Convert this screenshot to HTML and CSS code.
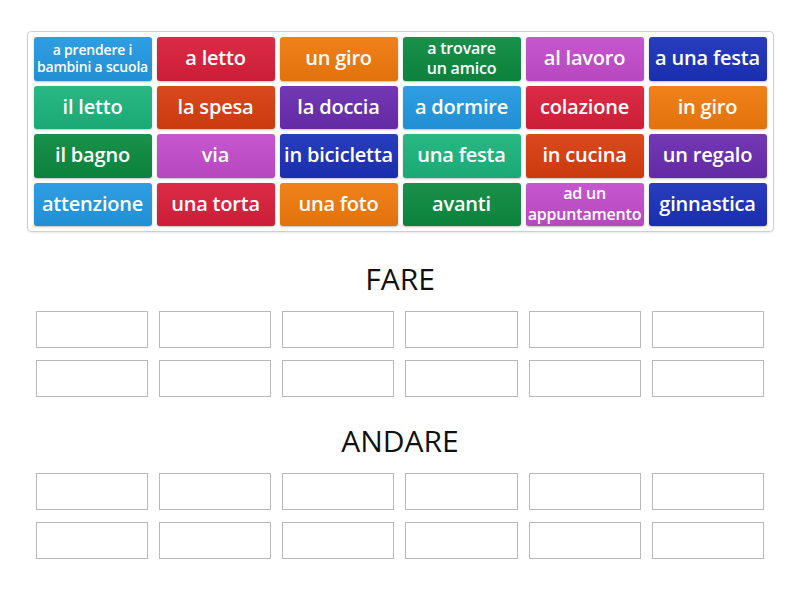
FILE: index.html
```html
<!DOCTYPE html>
<html lang="it">
<head>
  <meta charset="UTF-8" />
  <title>Fare o andare</title>
  <link rel="stylesheet" href="styles.css">
</head>
<body>

  <div class="page">
    <div class="bank">
      <div class="tile blue two small">a prendere i<br>bambini a scuola</div>
      <div class="tile red">a letto</div>
      <div class="tile orange">un giro</div>
      <div class="tile green two">a trovare<br>un amico</div>
      <div class="tile pink">al lavoro</div>
      <div class="tile navy">a una festa</div>

      <div class="tile teal">il letto</div>
      <div class="tile rust">la spesa</div>
      <div class="tile purple">la doccia</div>
      <div class="tile blue">a dormire</div>
      <div class="tile red">colazione</div>
      <div class="tile orange">in giro</div>

      <div class="tile green">il bagno</div>
      <div class="tile pink">via</div>
      <div class="tile navy">in bicicletta</div>
      <div class="tile teal">una festa</div>
      <div class="tile rust">in cucina</div>
      <div class="tile purple">un regalo</div>

      <div class="tile blue">attenzione</div>
      <div class="tile red">una torta</div>
      <div class="tile orange">una foto</div>
      <div class="tile green">avanti</div>
      <div class="tile pink two">ad un<br>appuntamento</div>
      <div class="tile navy">ginnastica</div>
    </div>

    <div class="group">
      <h2>FARE</h2>
      <div class="slots">
        <div class="slot"></div><div class="slot"></div><div class="slot"></div>
        <div class="slot"></div><div class="slot"></div><div class="slot"></div>
        <div class="slot"></div><div class="slot"></div><div class="slot"></div>
        <div class="slot"></div><div class="slot"></div><div class="slot"></div>
      </div>
    </div>

    <div class="group">
      <h2>ANDARE</h2>
      <div class="slots">
        <div class="slot"></div><div class="slot"></div><div class="slot"></div>
        <div class="slot"></div><div class="slot"></div><div class="slot"></div>
        <div class="slot"></div><div class="slot"></div><div class="slot"></div>
        <div class="slot"></div><div class="slot"></div><div class="slot"></div>
      </div>
    </div>
  </div>

</body>
</html>
```

FILE: styles.css
```css
body {
  margin: 0;
  background: white;
  font-family: "Open Sans", Arial, sans-serif;
}
.page {
  width: 747px;
  margin: 0 auto;
  padding-top: 31px;
}
.bank {
  display: grid;
  grid-template-columns: repeat(6, 118px);
  grid-auto-rows: 43.5px;
  gap: 5px 5px;
  padding: 5px 6px;
  border: 1px solid #cfcfcf;
  border-radius: 4px;
  box-shadow: 0 1px 2px rgba(0, 0, 0, 0.08);
}
.tile {
  display: flex;
  align-items: center;
  justify-content: center;
  text-align: center;
  color: white;
  font-size: 20px;
  font-weight: 600;
  line-height: 1;
  letter-spacing: -0.2px;
  border-radius: 3px;
  box-shadow: 0 1px 2px rgba(0, 0, 0, 0.25);
  background-image: linear-gradient(rgba(255, 255, 255, 0.06), rgba(0, 0, 0, 0.06));
  white-space: nowrap;
  padding-bottom: 1px;
}
.tile.two {
  font-size: 16px;
  line-height: 1.28;
}
.tile.small {
  font-size: 14px;
  line-height: 1.25;
}
.blue { background-color: #2298e0; }
.red { background-color: #d91f3b; }
.orange { background-color: #f07a0c; }
.green { background-color: #0c8a40; }
.pink { background-color: #c24ccb; }
.navy { background-color: #1b31b9; }
.teal { background-color: #1cb37c; }
.rust { background-color: #d83d10; }
.purple { background-color: #6a2caf; }

.group h2 {
  margin: 29px 0 14px;
  text-align: center;
  font-size: 30px;
  font-weight: 400;
  line-height: 36px;
  color: #111;
}
.group + .group h2 {
  margin-top: 26px;
}
.slots {
  display: grid;
  grid-template-columns: repeat(6, 1fr);
  grid-auto-rows: 37px;
  gap: 12px 11px;
  width: 728px;
  margin: 0 auto;
}
.slot {
  border: 1px solid #b9b9b9;
  background: white;
}
```
